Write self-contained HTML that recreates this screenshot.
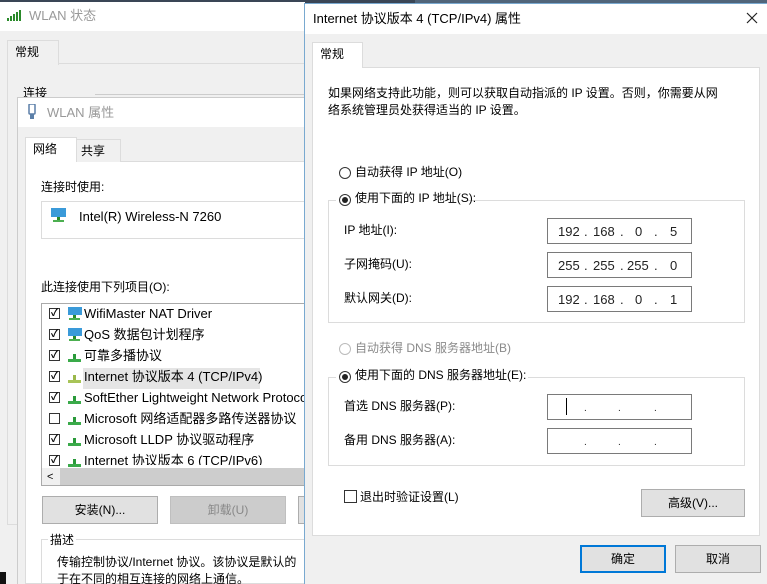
<!DOCTYPE html>
<html><head><meta charset="utf-8"><style>
*{margin:0;padding:0;box-sizing:border-box}
html,body{width:767px;height:584px;overflow:hidden}
body{position:relative;background:#f0f0f0;font-family:"Liberation Sans","Noto Sans CJK SC",sans-serif;font-size:12px;line-height:15px;color:#000}
.a{position:absolute;white-space:nowrap}
.btn{position:absolute;border:1px solid #adadad;background:#e1e1e1;text-align:center;line-height:26px}
.cb{position:absolute;width:11px;height:11px;border:1px solid #333;background:#fff;font-size:10px;line-height:9px;text-align:center;font-weight:bold}
.rd{position:absolute;width:12px;height:12px;border:1px solid #333;border-radius:50%;background:#fff}
.rd.on::after{content:"";position:absolute;left:2px;top:2px;width:6px;height:6px;border-radius:50%;background:#222}
.grp{position:absolute;border:1px solid #dcdcdc}
.ip{position:absolute;border:1px solid #7a7a7a;background:#fff;width:145px;height:26px;font-size:13px;color:#222}
.ip span{position:absolute;top:5px}
</style></head><body>
<div class="a" style="left:0;top:0;width:767px;height:3px;background:#3a4656"></div>
<div class="a" style="left:415px;top:0;width:352px;height:4px;background:#51657a"></div>

<div class="a" style="left:0;top:2px;width:305px;height:29px;background:#fff"></div>
<svg class="a" style="left:7px;top:10px" width="16" height="12"><rect x="0" y="8" width="2" height="3" fill="#2a8a2a"/><rect x="3" y="6" width="2" height="5" fill="#2a8a2a"/><rect x="6" y="4" width="2" height="7" fill="#2a8a2a"/><rect x="9" y="2" width="2" height="9" fill="#2a8a2a"/><rect x="12" y="0" width="2" height="11" fill="#2a8a2a"/></svg>
<div class="a" style="left:29px;top:8px;font-size:13px;color:#999">WLAN 状态</div>
<div class="a" style="left:7px;top:63px;width:300px;height:462px;border:1px solid #dcdcdc;background:#f0f0f0"></div>
<div class="a" style="left:7px;top:40px;width:52px;height:25px;background:#f0f0f0;border:1px solid #dcdcdc;border-bottom:none"></div>
<div class="a" style="left:15px;top:45px">常规</div>
<div class="a" style="left:95px;top:94px;width:210px;height:1px;background:#ccc"></div>
<div class="a" style="left:23px;top:86px">连接</div>
<div class="a" style="left:0;top:572px;width:6px;height:12px;background:#111"></div>

<div class="a" style="left:17px;top:97px;width:290px;height:487px;background:#f0f0f0;border-left:1px solid #ccc;border-top:1px solid #ccc"></div>
<div class="a" style="left:18px;top:98px;width:289px;height:29px;background:#fff"></div>
<svg class="a" style="left:27px;top:104px" width="10" height="16"><rect x="2" y="0" width="6" height="10" rx="1" fill="none" stroke="#5b7fa8" stroke-width="1.5"/><rect x="3" y="10" width="4" height="5" fill="#5b7fa8"/></svg>
<div class="a" style="left:47px;top:105px;font-size:13px;color:#999">WLAN 属性</div>
<div class="a" style="left:25px;top:161px;width:283px;height:423px;background:#fff;border:1px solid #dcdcdc"></div>
<div class="a" style="left:76px;top:139px;width:45px;height:23px;background:#f0f0f0;border:1px solid #dcdcdc;border-bottom:none"></div>
<div class="a" style="left:81px;top:144px">共享</div>
<div class="a" style="left:25px;top:137px;width:52px;height:25px;background:#fff;border:1px solid #dcdcdc;border-bottom:none"></div>
<div class="a" style="left:33px;top:142px">网络</div>
<div class="a" style="left:41px;top:180px">连接时使用:</div>
<div class="a" style="left:41px;top:201px;width:270px;height:38px;border:1px solid #dcdcdc;background:#fff"></div>
<svg class="a" style="left:50px;top:207px" width="18" height="15"><rect x="1" y="1" width="15" height="9" fill="#3a9ad9"/><rect x="7" y="10" width="3" height="3" fill="#2a8a2a"/><rect x="3" y="13" width="11" height="2" fill="#4caf50"/></svg>
<div class="a" style="left:79px;top:209px;font-size:13px">Intel(R) Wireless-N 7260</div>
<div class="a" style="left:41px;top:280px">此连接使用下列项目(O):</div>
<div class="a" style="left:41px;top:303px;width:270px;height:183px;border:1px solid #aaa;background:#fff;overflow:hidden">
<div class="a" style="left:41px;top:64px;width:177px;height:21px;background:#e5e5e5"></div>
<div class="a" style="left:0;top:164px;width:270px;height:18px;background:#f0f0f0"></div>
<div class="a" style="left:18px;top:164px;width:252px;height:18px;background:#cdcdcd"></div>
<div class="a" style="left:5px;top:166px;font-size:11px">&lt;</div>
</div>
<div id="items"></div>
<div class="btn" style="left:42px;top:496px;width:116px;height:28px">安装(N)...</div>
<div class="btn" style="left:170px;top:496px;width:116px;height:28px;background:#ccc;border-color:#bfbfbf;color:#888">卸载(U)</div>
<div class="btn" style="left:298px;top:496px;width:20px;height:28px"></div>
<div class="a" style="left:41px;top:539px;width:270px;height:50px;border:1px solid #dcdcdc"></div>
<div class="a" style="left:48px;top:533px;background:#fff;padding:0 2px">描述</div>
<div class="a" style="left:57px;top:555px">传输控制协议/Internet 协议。该协议是默认的</div>
<div class="a" style="left:57px;top:572px">于在不同的相互连接的网络上通信。</div>

<div class="a" style="left:304px;top:3px;width:463px;height:581px;background:#f0f0f0;border:1px solid #79a9d0;border-right:none;border-bottom:none"></div>
<div class="a" style="left:305px;top:4px;width:462px;height:30px;background:#fff"></div>
<div class="a" style="left:313px;top:11px;font-size:13px">Internet 协议版本 4 (TCP/IPv4) 属性</div>
<svg class="a" style="left:746px;top:12px" width="12" height="12"><path d="M1 1L11 11M11 1L1 11" stroke="#222" stroke-width="1.2"/></svg>
<div class="a" style="left:312px;top:67px;width:448px;height:469px;background:#fff;border:1px solid #dcdcdc"></div>
<div class="a" style="left:312px;top:42px;width:51px;height:26px;background:#fff;border:1px solid #dcdcdc;border-bottom:none"></div>
<div class="a" style="left:320px;top:47px">常规</div>
<div class="a" style="left:328px;top:86px">如果网络支持此功能，则可以获取自动指派的 IP 设置。否则，你需要从网</div>
<div class="a" style="left:328px;top:103px">络系统管理员处获得适当的 IP 设置。</div>
<div class="rd" style="left:339px;top:167px"></div>
<div class="a" style="left:355px;top:165px">自动获得 IP 地址(O)</div>
<div class="grp" style="left:328px;top:200px;width:417px;height:123px"></div>
<div class="a" style="left:336px;top:191px;width:132px;height:18px;background:#fff"></div>
<div class="rd on" style="left:339px;top:194px"></div>
<div class="a" style="left:355px;top:191px">使用下面的 IP 地址(S):</div>
<div class="a" style="left:344px;top:223px">IP 地址(I):</div>
<div class="a" style="left:344px;top:257px">子网掩码(U):</div>
<div class="a" style="left:344px;top:291px">默认网关(D):</div>
<div class="ip" style="left:547px;top:218px"><span style="left:10px">192</span><span style="left:36px">.</span><span style="left:45px">168</span><span style="left:72px">.</span><span style="left:87px">0</span><span style="left:106px">.</span><span style="left:122px">5</span></div>
<div class="ip" style="left:547px;top:252px"><span style="left:10px">255</span><span style="left:36px">.</span><span style="left:45px">255</span><span style="left:72px">.</span><span style="left:79px">255</span><span style="left:106px">.</span><span style="left:122px">0</span></div>
<div class="ip" style="left:547px;top:286px"><span style="left:10px">192</span><span style="left:36px">.</span><span style="left:45px">168</span><span style="left:72px">.</span><span style="left:87px">0</span><span style="left:106px">.</span><span style="left:122px">1</span></div>
<div class="rd" style="left:339px;top:343px;border-color:#bbb"></div>
<div class="a" style="left:355px;top:341px;color:#8a8a8a">自动获得 DNS 服务器地址(B)</div>
<div class="grp" style="left:328px;top:377px;width:417px;height:89px"></div>
<div class="a" style="left:336px;top:368px;width:192px;height:18px;background:#fff"></div>
<div class="rd on" style="left:339px;top:371px"></div>
<div class="a" style="left:355px;top:368px">使用下面的 DNS 服务器地址(E):</div>
<div class="a" style="left:344px;top:399px">首选 DNS 服务器(P):</div>
<div class="a" style="left:344px;top:433px">备用 DNS 服务器(A):</div>
<div class="ip" style="left:547px;top:394px"><span style="left:18px;top:3px;width:1px;height:17px;background:#000"></span><span style="left:36px;font-size:10px;top:6px">.</span><span style="left:70px;font-size:10px;top:6px">.</span><span style="left:106px;font-size:10px;top:6px">.</span></div>
<div class="ip" style="left:547px;top:428px"><span style="left:36px;font-size:10px;top:6px">.</span><span style="left:70px;font-size:10px;top:6px">.</span><span style="left:106px;font-size:10px;top:6px">.</span></div>
<div class="a" style="left:344px;top:490px;width:13px;height:13px;border:1px solid #333;background:#fff"></div>
<div class="a" style="left:360px;top:490px">退出时验证设置(L)</div>
<div class="btn" style="left:641px;top:489px;width:104px;height:28px">高级(V)...</div>
<div class="btn" style="left:580px;top:545px;width:86px;height:28px;border:2px solid #0078d7;line-height:24px">确定</div>
<div class="btn" style="left:675px;top:545px;width:86px;height:28px">取消</div>

<script>
var it=[["WifiMaster NAT Driver",1,1],["QoS 数据包计划程序",1,1],["可靠多播协议",1,0],["Internet 协议版本 4 (TCP/IPv4)",1,2],["SoftEther Lightweight Network Protocol",1,0],["Microsoft 网络适配器多路传送器协议",0,0],["Microsoft LLDP 协议驱动程序",1,0],["Internet 协议版本 6 (TCP/IPv6)",1,0]];
var h="";
it.forEach(function(t,i){var y=308+i*21;
h+='<div class="cb" style="left:49px;top:'+y+'px">'+(t[1]?'✓':'')+'</div>';
if(t[2]==1)h+='<svg class="a" style="left:66px;top:'+(y-2)+'px" width="18" height="16"><rect x="2" y="1" width="14" height="8" fill="#3a9ad9"/><rect x="7" y="9" width="3" height="3" fill="#2a8a2a"/><rect x="3" y="12" width="11" height="2" fill="#4caf50"/></svg>';
else h+='<svg class="a" style="left:68px;top:'+(y+3)+'px" width="14" height="10"><rect x="5" y="1" width="3" height="5" fill="'+(t[2]==2?'#9ab84a':'#2a9a3a')+'"/><rect x="0" y="6" width="13" height="3" fill="'+(t[2]==2?'#a8c458':'#3aaa4a')+'"/></svg>';
h+='<div class="a" style="left:84px;top:'+(y-2)+'px;font-size:13px;line-height:15px;height:'+(i==7?'12':'16')+'px;max-width:222px;overflow:hidden">'+t[0]+'</div>';});
document.getElementById("items").innerHTML=h;
</script>
</body></html>
